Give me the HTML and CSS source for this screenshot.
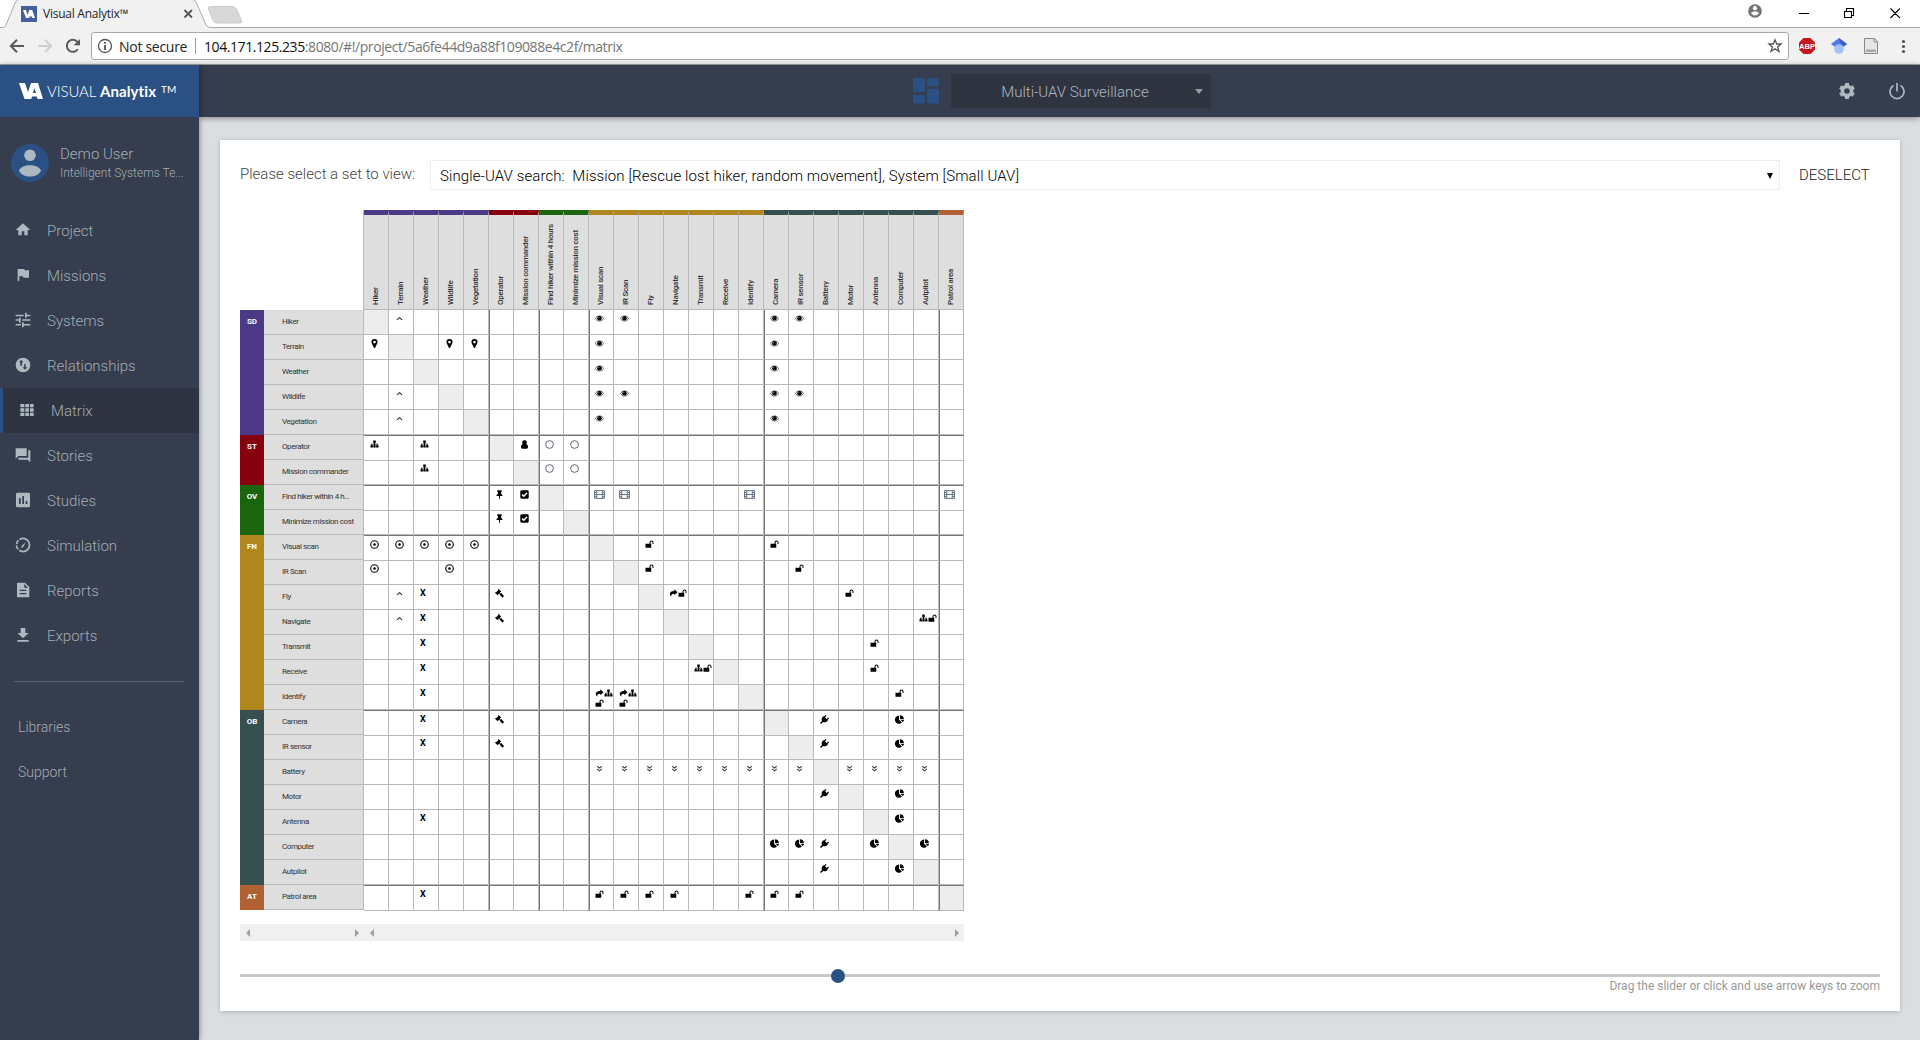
FILE: index.html
```html
<!DOCTYPE html>
<html lang="en">
<head>
<meta charset="utf-8">
<title>Visual Analytix™</title>
<link rel="stylesheet" href="styles.css">
</head>
<body>
<svg class="defs" width="0" height="0" aria-hidden="true">
  <symbol id="eye" viewBox="0 0 18 16"><path d="M.8 8C4 1.200 14 1.200 17.200 8C14 14.800 4 14.800 .8 8Z" fill="#fff" stroke="#333" stroke-width="1.500"/><circle cx="9" cy="7.600" r="4.600"/><circle cx="7.600" cy="6" r="1" fill="#8aa"/></symbol>
  <symbol id="pin" viewBox="0 0 16 16"><path fill-rule="evenodd" d="M8 0A5.500 5.500 0 0 1 13.500 5.500C13.500 8 10.800 11 9 16H7C5.200 11 2.500 8 2.500 5.500A5.500 5.500 0 0 1 8 0ZM8 3.200A2.300 2.300 0 1 0 8 7.800A2.300 2.300 0 1 0 8 3.200Z"/></symbol>
  <symbol id="up" viewBox="0 0 16 16"><path d="M3.500 10.500L8 6.500L12.500 10.500" fill="none" stroke="#222" stroke-width="1.800"/></symbol>
  <symbol id="down2" viewBox="0 0 16 16"><path d="M4 4L8 7.200L12 4M4 9L8 12.200L12 9" fill="none" stroke="#5a3f4e" stroke-width="2.100"/></symbol>
  <symbol id="sitemap" viewBox="0 0 16 16"><path d="M5.500 1H10.500V6H9V7.500H14.500V10.500H16V15H11.200V10.500H12.800V9H9V10.500H10.400V15H5.600V10.500H7V9H3.200V10.500H4.800V15H0V10.500H1.500V7.500H7V6H5.500Z"/></symbol>
  <symbol id="person" viewBox="0 0 16 16"><path d="M8 .3A4 4 0 0 1 11 7.200C13.500 8 14.200 10.500 14.200 12.500C14.200 14.500 13.200 15.500 12 15.500H4C2.800 15.500 1.800 14.500 1.800 12.500C1.800 10.500 2.500 8 5 7.200A4 4 0 0 1 8 .3Z"/></symbol>
  <symbol id="circle" viewBox="0 0 16 16"><circle cx="8" cy="8" r="6.900" fill="none" stroke="#4d5565" stroke-width="1.600"/></symbol>
  <symbol id="dot" viewBox="0 0 16 16"><circle cx="8" cy="8" r="6.700" fill="none" stroke="#000" stroke-width="2"/><circle cx="8" cy="8" r="2.300"/></symbol>
  <symbol id="tack" viewBox="0 0 16 16"><path d="M4 .5H12V3H11V7C12.600 8 13.500 9 13.500 10.800H9L8.700 16H7.400L7 10.800H2.500C2.500 9 3.400 8 5 7V3H4Z"/></symbol>
  <symbol id="check" viewBox="0 0 16 16"><rect x=".5" y=".5" width="15" height="15" rx="2.500"/><path d="M3.500 8L6.800 11.200L12.500 5" fill="none" stroke="#fff" stroke-width="2.400"/></symbol>
  <symbol id="film" viewBox="0 0 20 16"><path d="M1 1H19V15H1ZM5 1V15M15 1V15M5 8H15M1 4.500H5M1 8H5M1 11.500H5M15 4.500H19M15 8H19M15 11.500H19" fill="none" stroke="#5d6a80" stroke-width="1.700"/></symbol>
  <symbol id="lock" viewBox="0 0 16 16"><path d="M0 7.300H8V5A4 4 0 0 1 16 5V8H14V5A2 2 0 0 0 10 5V7.300H11.500V15.500H0Z"/></symbol>
  <symbol id="gavel" viewBox="0 0 16 16"><path d="M6.500 0L11 4.300L9.700 5.800L9.200 5.400L8.500 7L10 8L11 7.300L16 12.500L13.500 15.500L8.300 10.300L8.800 9.300L7.300 8.200L5.700 9.200L6.200 9.700L4.800 11.200L0 6.700L1.400 5.200L2 5.700L5.700 2L5.200 1.300Z"/></symbol>
  <symbol id="share" viewBox="0 0 16 16"><path d="M9.500 .5L16 6.500L9.500 12.500V9.300C5 9 3 11 3.500 15.500C-2 9 1 4 9.500 3.800Z"/></symbol>
  <symbol id="plug" viewBox="0 0 16 16"><path d="M10 0L11.500 1.500L9 4.200L11.800 7L14.500 4.500L16 6L13.200 8.800L14 9.800C11.500 13 8.500 13.800 5.500 12.500L1.800 16L0 14.200L3.500 10.500C2.200 7.500 3 4.500 6.200 2L7.200 2.800Z"/></symbol>
  <symbol id="pie" viewBox="0 0 16 16"><path d="M7.300 1V8.500L12.300 13.500A7.300 7.300 0 1 1 7.300 1Z"/><path d="M9 .5A7 7 0 0 1 15.700 7H9Z"/><path d="M9.800 8.500H16A7 7 0 0 1 14 12.700Z"/></symbol>
</svg>

<div class="browser">
  <div class="tabs">
    <svg class="tab-shapes" width="260" height="28" viewBox="0 0 260 28">
      <path d="M0 27.500H2.500Q5 27.500 6 25L15 3Q16.200 0 19 -1H192Q195 0 196.500 3L206 25Q208 27.500 211 27.500V29H0Z" fill="#f1f1f1"/>
      <path d="M0 27.500H2.500Q5 27.500 6 25L15 3Q16.200 0 19 -1H192Q195 0 196.500 3L206 25Q208 27.500 211 27.500H260" fill="none" stroke="#ababab"/>
      <path d="M210 6.500H232Q235 6.500 236.500 9L241.500 20.500Q242.500 23 240 23H217Q214.500 23 213 20.500L208.500 9Q207.500 6.500 210 6.500Z" fill="#d8d8d8" stroke="#c2c2c2" stroke-width=".8"/>
      <path d="M184.500 10L192 17.500M192 10L184.500 17.500" stroke="#555" stroke-width="1.800"/>
      <rect x="21" y="6" width="16" height="16" fill="#426099"/>
      <path d="M23 10H25.800L27.600 15L29.300 10H32.200L35 18H32.400L32 16.500H29.500L29 18H26Z" fill="#fff"/>
    </svg>
    <span class="tab-title">Visual Analytix™</span>
    <svg class="window-buttons" width="160" height="27" viewBox="0 0 160 27">
      <circle cx="15" cy="11" r="6.800" fill="#737373"/><circle cx="15" cy="8.200" r="2.100" fill="#fff"/><path d="M10.800 13Q15 9.500 19.200 13Q15 18 10.800 13Z" fill="#fff"/>
      <path d="M59 13.500H69M104.500 11.500H111.500V17.500H104.500ZM106.500 11V8.500H113.500V15.500H112M150.500 8.500L160 18M160 8.500L150.500 18" fill="none" stroke="#000" stroke-width="1.100"/>
    </svg>
  </div>
  <div class="toolbar">
    <svg width="90" height="36" viewBox="0 0 90 36">
      <path d="M24 18H11.500M17 11.800L10.800 18L17 24.200" fill="none" stroke="#5a5a5a" stroke-width="2"/>
      <path d="M38 18H50.500M45 11.800L51.200 18L45 24.200" fill="none" stroke="#cfcfcf" stroke-width="2"/>
      <path d="M77.800 21.200A6 6 0 1 1 77.500 14" fill="none" stroke="#5a5a5a" stroke-width="2"/><path d="M80 11V17.300H73.700Z" fill="#5a5a5a"/>
    </svg>
    <div class="address">
      <svg width="16" height="16" viewBox="0 0 16 16"><circle cx="8" cy="8" r="6.500" fill="none" stroke="#555" stroke-width="1.300"/><path d="M8 7V12M8 4V5.700" stroke="#555" stroke-width="1.800"/></svg>
      <span class="secure">Not secure</span><span class="bar"></span>
      <span class="url"><b>104.171.125.235</b>:8080/#!/project/5a6fe44d9a88f109088e4c2f/matrix</span>
      <svg class="star" width="16" height="16" viewBox="0 0 16 16"><path d="M8 1.800L9.700 6H14L10.600 8.900L12 13.500L8 10.800L4 13.500L5.400 8.900L2 6H6.300Z" fill="none" stroke="#555" stroke-width="1.300"/></svg>
    </div>
    <svg class="extensions" width="131" height="36" viewBox="0 0 131 36">
      <path d="M14.500 10H21.500L26 14.500V21.500L21.500 26H14.500L10 21.500V14.500Z" fill="#c4161c"/><text x="18" y="21" text-anchor="middle" class="abp">ABP</text>
      <path d="M50 10L58 16L50 22L42 16Z" fill="#4c7be8"/><path d="M50 10L58 16L53 20Z" fill="#3b62c4"/><circle cx="50" cy="21" r="4.800" fill="#a3c1fb"/>
      <path d="M75.500 10.500H85.500L88.500 13.500V25.500H75.500Z" fill="#e6e6e6" stroke="#888"/><path d="M77 21.500H87V24H77Z" fill="#aaa"/><path d="M85 11V14H88" fill="none" stroke="#888"/>
      <g fill="#555"><circle cx="114.500" cy="13.500" r="1.600"/><circle cx="114.500" cy="18.500" r="1.600"/><circle cx="114.500" cy="23.500" r="1.600"/></g>
    </svg>
  </div>
</div>

<div class="app">
  <aside class="sidebar">
    <div class="brand">
      <svg width="24" height="18" viewBox="0 0 24 18"><path d="M0 1H6L9 10L12 1H19L24 17H18.500L17.800 14.500H13L12.300 17H5.500ZM14 11H17L15.500 6Z" fill="#fff" fill-rule="evenodd"/></svg>
      <span class="brand-light">VISUAL</span><b>Analytix</b><span class="tm">TM</span>
    </div>
    <div class="user">
      <svg width="38" height="38" viewBox="0 0 38 38"><circle cx="19" cy="19" r="19" fill="#2b5184"/><circle cx="19" cy="11.300" r="5.800" fill="#adb9c1"/><path d="M8 26.500C11 19.500 27 19.500 30 26.500C27 34.500 11 34.500 8 26.500Z" fill="#adb9c1"/></svg>
      <div><div class="user-name">Demo User</div><div class="user-org">Intelligent Systems Te...</div></div>
    </div>
    <nav class="nav">
      <a><svg viewBox="0 0 24 24"><path d="M10 20V14H14V20H19V12H23L12 2L1 12H5V20Z"/></svg><span>Project</span></a>
      <a><svg viewBox="0 0 24 24"><path d="M14.400 5L14 3H4V21H6.500V14H12L12.400 16H21V5Z"/></svg><span>Missions</span></a>
      <a><svg viewBox="0 0 24 24"><path d="M1 18V20.300H9V18ZM1 4V6.300H13V4ZM13 23V20.300H23V18H13V15.500H10.500V23ZM6 8.500V11H1V13.300H6V16H8.500V8.500ZM23 13.300V11H11V13.300ZM15 8.500H17.500V6.300H23V4H17.500V1H15Z"/></svg><span>Systems</span></a>
      <a><svg viewBox="0 0 24 24"><path fill-rule="evenodd" d="M12 1A11 11 0 1 1 12 23A11 11 0 1 1 12 1ZM6 8H8V13H10.500V8H12.500L9.200 4.500ZM11.500 15.500L15 19L18.500 15.500H16V10.500H13.800V15.500Z"/></svg><span>Relationships</span></a>
      <a class="active"><svg viewBox="0 0 24 24"><path d="M2 3H8V8H2ZM9.500 3H15V8H9.500ZM16.500 3H22V8H16.500ZM2 9.500H8V14.500H2ZM9.500 9.500H15V14.500H9.500ZM16.500 9.500H22V14.500H16.500ZM2 16H8V21H2ZM9.500 16H15V21H9.500ZM16.500 16H22V21H16.500Z"/></svg><span>Matrix</span></a>
      <a><svg viewBox="0 0 24 24"><path d="M20 5H23V23L19 19H5V16H20ZM17.500 2V13.500H5L1 17.500V2Z"/></svg><span>Stories</span></a>
      <a><svg viewBox="0 0 24 24"><path fill-rule="evenodd" d="M4 1H20Q22.500 1 22.500 3V21Q22.500 23 20 23H4Q1.500 23 1.500 21V3Q1.500 1 4 1ZM6 9V18H8.500V9ZM11 6V18H13.500V6ZM16 13.500V18H18.500V13.500Z"/></svg><span>Studies</span></a>
      <a><svg viewBox="0 0 24 24"><path d="M12 2.200A9.800 9.800 0 0 1 12 21.800" fill="none" stroke="#adb9c1" stroke-width="2.600"/><path d="M12 21.800A9.800 9.800 0 0 1 12 2.200" fill="none" stroke="#adb9c1" stroke-width="2.600" stroke-dasharray="6 2.200"/><path d="M16 8L12.500 15L9.500 17L10 13Z"/></svg><span>Simulation</span></a>
      <a><svg viewBox="0 0 24 24"><path fill-rule="evenodd" d="M3 1H15L21.500 7.500V23H3ZM7 11.500V13.500H17V11.500ZM7 16.500V18.500H17V16.500ZM14 3V8.500H19.500Z"/></svg><span>Reports</span></a>
      <a><svg viewBox="0 0 24 24"><path d="M20.500 9H15.500V1.500H8.500V9H3.500L12 17ZM3.500 19.500V22H20.500V19.500Z"/></svg><span>Exports</span></a>
    </nav>
    <hr>
    <nav class="links"><a>Libraries</a><a>Support</a></nav>
  </aside>

  <div class="main">
    <header class="topbar">
      <svg width="26" height="26" viewBox="0 0 26 26"><path d="M0 0H12V14H0ZM14 0H26V8H14ZM0 17H12V25.500H0ZM14 11H26V25.500H14Z" fill="#2b5184"/></svg>
      <div class="project"><span>Multi-UAV Surveillance</span><i class="caret"></i></div>
      <svg class="gear" width="18" height="18" viewBox="0 0 18 18"><path d="M9 3.300V1M9 17V14.700M4 6.100L2.200 5M15.800 13L14 11.900M4 11.900L2.200 13M15.800 5L14 6.100" stroke="#adb9c1" stroke-width="4"/><circle cx="9" cy="9" r="4.600" fill="none" stroke="#adb9c1" stroke-width="3.600"/></svg>
      <svg class="power" width="16" height="18" viewBox="0 0 16 18"><path d="M4.500 3.500A7 7 0 1 0 11.500 3.500M8 1V9.500" fill="none" stroke="#adb9c1" stroke-width="1.700"/></svg>
    </header>
    <section class="card">
      <div class="picker">
        <label>Please select a set to view:</label>
        <div class="select"><span>Single-UAV search:&nbsp; Mission [Rescue lost hiker, random movement], System [Small UAV]</span><i class="caret"></i></div>
        <span class="deselect">DESELECT</span>
      </div>
      <div class="matrix">
        <div class="heads" id="heads"></div>
        <div class="body">
          <div class="groups" id="groups"></div>
          <div class="labels" id="labels"></div>
          <div class="cells" id="cells"></div>
        </div>
      </div>
      <div class="scrolls">
        <div class="scroll side"><i></i><i class="right"></i></div>
        <div class="scroll"><i></i><i class="right"></i></div>
      </div>
      <div class="slider"><div class="knob"></div></div>
      <div class="hint">Drag the slider or click and use arrow keys to zoom</div>
    </section>
  </div>
</div>
<script src="matrix.js"></script>
</body>
</html>
```

FILE: styles.css
```css
* { box-sizing: border-box; }
body { margin: 0; width: 1920px; height: 1040px; overflow: hidden; font-family: Roboto, "Liberation Sans", sans-serif; background: #dadee1; display: flex; flex-direction: column; }
svg { display: block; flex: none; }
.defs { position: absolute; }

/* browser chrome */
.browser { height: 65px; flex: none; font-family: "Open Sans", "Noto Sans", sans-serif; background: #fff; }
.tabs { height: 28px; display: flex; position: relative; border-bottom: 1px solid #ababab; }
.tab-shapes { position: absolute; left: 0; top: 0; background: #fff; }
.tab-title { position: relative; margin-left: 43px; line-height: 27px; font-size: 12px; letter-spacing: -.25px; color: #222; }
.window-buttons { margin-left: auto; margin-right: 20px; }
.toolbar { height: 37px; display: flex; background: #f1f1f1; border-bottom: 1px solid #a5a5a5; }
.address { flex: 1; height: 28px; margin: 4px 0 0 1px; display: flex; align-items: center; padding: 0 5px; background: #fff; border: 1px solid #a9a9a9; border-radius: 3px; font-size: 14px; }
.secure { margin-left: 6px; width: 67px; color: #222; letter-spacing: -.28px; white-space: nowrap; }
.bar { width: 1px; height: 16px; background: #999; margin: 0 8px 0 9px; }
.url { color: #757575; letter-spacing: -.42px; white-space: nowrap; }
.url b { font-weight: 400; color: #111; }
.star { margin-left: auto; }
.abp { font: bold 7.500px "Liberation Sans", sans-serif; fill: #fff; }

.app { flex: 1; display: flex; min-height: 0; }

/* sidebar */
.sidebar { width: 199px; flex: none; background: #353d4e; color: #a3adb5; box-shadow: 1px 0 5px rgba(0,0,0,.35); position: relative; }
.brand { height: 52px; background: #2b5184; color: #fff; display: flex; align-items: center; padding-left: 19px; font-size: 15px; font-family: Lato, sans-serif; }
.brand-light { font-weight: 300; margin-left: 4px; width: 53px; letter-spacing: -.1px; }
.brand b { font-size: 15px; width: 59px; letter-spacing: .1px; }
.tm { font-size: 10px; font-weight: 400; margin: -4px 0 0 2px; }
.user { display: flex; align-items: center; gap: 11px; padding: 26px 0 0 11px; font-weight: 300; }
.user-name { font-size: 15px; line-height: 20px; margin-top: 1px; }
.user-org { font-size: 12px; line-height: 19px; white-space: nowrap; }
.nav { padding-top: 25px; }
.nav a { height: 45px; display: flex; align-items: center; padding-left: 15px; gap: 16px; font-size: 15px; font-weight: 300; }
.nav svg { width: 16px; height: 16px; fill: #adb9c1; margin-top: -1px; }
.nav .active { background: #2e3441; border-left: 3px solid #2b5184; padding-left: 16px; }
hr { border: 0; height: 1px; background: #59616f; margin: 23px 15px 23px 14px; }
.links a { display: block; height: 45px; line-height: 45px; padding-left: 18px; font-size: 14px; font-weight: 300; }

/* top bar and card */
.main { flex: 1; min-width: 0; display: flex; flex-direction: column; }
.topbar { height: 52px; flex: none; display: flex; align-items: center; padding: 0 15px 0 714px; background: #353d4e; box-shadow: 0 1px 6px rgba(0,0,0,.4); }
.project { width: 260px; height: 34px; margin-left: 12px; background: #2f3440; color: #adb9c1; font-size: 15px; font-weight: 300; display: flex; align-items: center; justify-content: center; padding: 1px 12px 0 0; position: relative; }
.caret { width: 0; height: 0; border: 4px solid transparent; border-top: 5px solid currentColor; border-bottom: 0; }
.project .caret { position: absolute; right: 8px; top: 15px; opacity: .8; }
.gear { margin-left: auto; }
.power { margin-left: 33px; }
.card { width: 1680px; height: 871px; margin: 23px 0 0 21px; padding: 21px 20px 0; background: #fff; box-shadow: 0 1px 5px rgba(0,0,0,.2); }
.picker { height: 28px; display: flex; align-items: center; }
.picker label { width: 190px; margin-top: -2px; font-size: 15px; font-weight: 300; color: #444; }
.select { width: 1350px; height: 30px; border: 1px solid #eee; display: flex; align-items: center; justify-content: space-between; padding: 2px 6px 0 9px; font-size: 15px; font-weight: 300; letter-spacing: .1px; color: #000; }
.select .caret { border-width: 6px 3px 0; }
.deselect { margin-left: 19px; font-size: 15px; font-weight: 300; color: #222; }

/* matrix */
.matrix { margin-top: 21px; width: 724px; font-family: Roboto, sans-serif; }
.heads { height: 100px; margin-left: 123px; display: flex; border-left: 1px solid #b9b9b9; }
.head { width: 25px; height: 100px; background: #dedede; border-top: 5px solid; border-right: 1px solid #b9b9b9; box-shadow: inset 0 -1px #b9b9b9; display: flex; align-items: center; padding: 0 0 5px 6px; }
.head span { writing-mode: vertical-rl; transform: rotate(180deg); height: 90px; white-space: nowrap; font-size: 8px; font-weight: 500; letter-spacing: -.27px; line-height: 12px; color: #333; }
.body { display: flex; }
.groups { width: 24px; }
.group { color: #fff; font-size: 8px; font-weight: 700; text-align: center; line-height: 24px; }
.labels { width: 100px; }
.label { height: 25px; line-height: 24px; padding-left: 18px; background: #dedede; border: 1px solid #b9b9b9; border-width: 0 1px 1px 0; font-size: 8px; letter-spacing: -.4px; color: #333; white-space: nowrap; }
.cells { width: 600px; }
.row { display: flex; height: 25px; }
.row.first { height: 26px; }
.row.second { height: 24px; }
.cell { width: 25px; border: 1px solid #b9b9b9; border-width: 0 1px 1px 0; padding: 4px 0 0 6px; display: flex; flex-wrap: wrap; align-content: flex-start; overflow: hidden; }
.row.first .cell { border-top: 1px solid #777; }
.row.second .cell { padding-top: 3px; }
.row .cell.split { border-left: 1px solid #777; padding-left: 5px; }
.row .cell.multi { padding-left: 5px; }
.cell.self { background: #ededed; }
.cell svg { width: 9px; height: 9px; }
.cell svg.lock, .cell svg.share, .cell svg.sitemap { height: 8px; margin-bottom: 2px; }
.cell svg.film { width: 11px; height: 9px; margin-left: -1px; }
.cell b { font-size: 9px; line-height: 9px; color: #000; }

.scrolls { display: flex; margin-top: 13px; }
.scroll { width: 600px; height: 17px; background: #f0f0f0; display: flex; justify-content: space-between; align-items: center; padding: 0 5px 0 6px; }
.scroll.side { width: 124px; }
.scroll i { width: 0; height: 0; border: 4px solid transparent; border-left: 0; border-right-color: #a0a0a0; }
.scroll i.right { border: 4px solid transparent; border-right: 0; border-left-color: #a0a0a0; }
.slider { height: 3px; margin-top: 33px; background: #c9c9c9; position: relative; }
.knob { position: absolute; left: 591px; top: -5px; width: 14px; height: 14px; border-radius: 50%; background: #2b5184; }
.hint { text-align: right; font-size: 12px; line-height: 14px; margin-top: 2px; color: #999; }
```

FILE: matrix.js
```js
const groups = [
  { code: 'SD', color: '#4c3a87', items: ['Hiker', 'Terrain', 'Weather', 'Wildlife', 'Vegetation'] },
  { code: 'ST', color: '#86000e', items: ['Operator', 'Mission commander'] },
  { code: 'OV', color: '#1b650f', items: ['Find hiker within 4 hours', 'Minimize mission cost'] },
  { code: 'FN', color: '#b0861e', items: ['Visual scan', 'IR Scan', 'Fly', 'Navigate', 'Transmit', 'Receive', 'Identify'] },
  { code: 'OB', color: '#364f4f', items: ['Camera', 'IR sensor', 'Battery', 'Motor', 'Antenna', 'Computer', 'Autpilot'] },
  { code: 'AT', color: '#b06033', items: ['Patrol area'] }
];
const relations = [
  { 1: 'up', 9: 'eye', 10: 'eye', 16: 'eye', 17: 'eye' },
  { 0: 'pin', 3: 'pin', 4: 'pin', 9: 'eye', 16: 'eye' },
  { 9: 'eye', 16: 'eye' },
  { 1: 'up', 9: 'eye', 10: 'eye', 16: 'eye', 17: 'eye' },
  { 1: 'up', 9: 'eye', 16: 'eye' },
  { 0: 'sitemap', 2: 'sitemap', 6: 'person', 7: 'circle', 8: 'circle' },
  { 2: 'sitemap', 7: 'circle', 8: 'circle' },
  { 5: 'tack', 6: 'check', 9: 'film', 10: 'film', 15: 'film', 23: 'film' },
  { 5: 'tack', 6: 'check' },
  { 0: 'dot', 1: 'dot', 2: 'dot', 3: 'dot', 4: 'dot', 11: 'lock', 16: 'lock' },
  { 0: 'dot', 3: 'dot', 11: 'lock', 17: 'lock' },
  { 1: 'up', 2: 'X', 5: 'gavel', 12: 'share lock', 19: 'lock' },
  { 1: 'up', 2: 'X', 5: 'gavel', 22: 'sitemap lock' },
  { 2: 'X', 20: 'lock' },
  { 2: 'X', 13: 'sitemap lock', 20: 'lock' },
  { 2: 'X', 9: 'share sitemap lock', 10: 'share sitemap lock', 21: 'lock' },
  { 2: 'X', 5: 'gavel', 18: 'plug', 21: 'pie' },
  { 2: 'X', 5: 'gavel', 18: 'plug', 21: 'pie' },
  { 9: 'down2', 10: 'down2', 11: 'down2', 12: 'down2', 13: 'down2', 14: 'down2', 15: 'down2', 16: 'down2', 17: 'down2', 19: 'down2', 20: 'down2', 21: 'down2', 22: 'down2' },
  { 18: 'plug', 21: 'pie' },
  { 2: 'X', 21: 'pie' },
  { 16: 'pie', 17: 'pie', 18: 'plug', 20: 'pie', 22: 'pie' },
  { 18: 'plug', 21: 'pie' },
  { 2: 'X', 9: 'lock', 10: 'lock', 11: 'lock', 12: 'lock', 15: 'lock', 16: 'lock', 17: 'lock' }
];

const items = groups.flatMap((g, gi) => g.items.map((name, i) => ({ name, color: g.color, pos: gi ? i : -1 })));
const byId = id => document.getElementById(id);
const icon = name => name === 'X' ? '<b>X</b>' : `<svg class="${name}"><use href="#${name}"/></svg>`;

byId('heads').innerHTML = items.map(t => `<div class="head" style="border-top-color:${t.color}"><span>${t.name}</span></div>`).join('');
byId('groups').innerHTML = groups.map(g => `<div class="group" style="background:${g.color};height:${g.items.length * 25}px">${g.code}</div>`).join('');
byId('labels').innerHTML = items.map(t => `<div class="label">${t.name.length > 22 ? t.name.slice(0, 21) + '...' : t.name}</div>`).join('');
byId('cells').innerHTML = items.map((rowItem, r) => {
  const kind = rowItem.pos === 0 ? ' first' : rowItem.pos === 1 ? ' second' : '';
  const cells = items.map((colItem, c) => {
    const icons = relations[r][c] ? relations[r][c].split(' ') : [];
    let cls = 'cell';
    if (colItem.pos === 0) cls += ' split';
    if (r === c) cls += ' self';
    if (icons.length > 1) cls += ' multi';
    return `<div class="${cls}">${icons.map(icon).join('')}</div>`;
  }).join('');
  return `<div class="row${kind}">${cells}</div>`;
}).join('');
```
